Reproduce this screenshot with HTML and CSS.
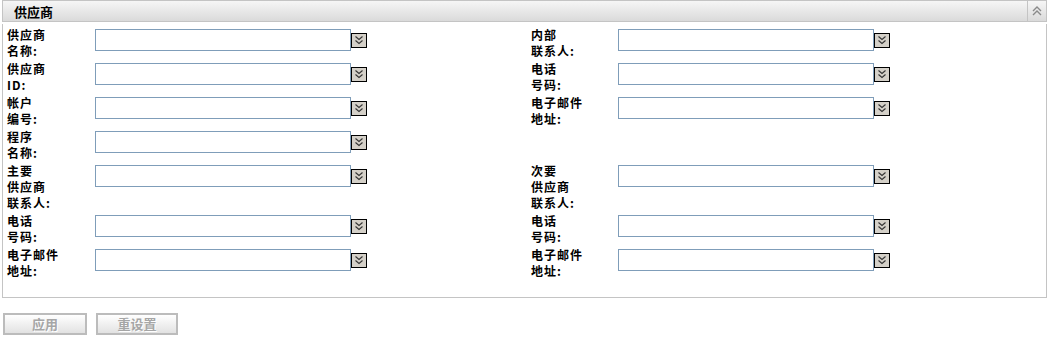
FILE: index.html
```html
<!DOCTYPE html>
<html lang="zh-CN">
<head>
    <meta charset="UTF-8">
    <title>供应商</title>
    <link rel="stylesheet" href="styles.css">
</head>
<body>
    <section class="panel">
        <div class="panel-head">
            <span class="panel-title">供应商</span>
            <span class="toggle">
                <svg width="18" height="20" viewBox="0 0 18 20"><path d="M5 10 L9 6 L13 10 M5 14 L9 10 L13 14" fill="none" stroke="#8a8a8a" stroke-width="1.4"/></svg>
            </span>
        </div>
        <div class="panel-body">
            <div class="form">
                <div class="lbl">供应商<br>名称:</div>
                <div class="fld"><input type="text"><span class="pick"></span></div>
                <div class="lbl">内部<br>联系人:</div>
                <div class="fld"><input type="text"><span class="pick"></span></div>

                <div class="lbl">供应商<br>ID:</div>
                <div class="fld"><input type="text"><span class="pick"></span></div>
                <div class="lbl">电话<br>号码:</div>
                <div class="fld"><input type="text"><span class="pick"></span></div>

                <div class="lbl">帐户<br>编号:</div>
                <div class="fld"><input type="text"><span class="pick"></span></div>
                <div class="lbl">电子邮件<br>地址:</div>
                <div class="fld"><input type="text"><span class="pick"></span></div>

                <div class="lbl">程序<br>名称:</div>
                <div class="fld"><input type="text"><span class="pick"></span></div>
                <div class="lbl"></div>
                <div class="fld"></div>

                <div class="lbl">主要<br>供应商<br>联系人:</div>
                <div class="fld"><input type="text"><span class="pick"></span></div>
                <div class="lbl">次要<br>供应商<br>联系人:</div>
                <div class="fld"><input type="text"><span class="pick"></span></div>

                <div class="lbl">电话<br>号码:</div>
                <div class="fld"><input type="text"><span class="pick"></span></div>
                <div class="lbl">电话<br>号码:</div>
                <div class="fld"><input type="text"><span class="pick"></span></div>

                <div class="lbl">电子邮件<br>地址:</div>
                <div class="fld"><input type="text"><span class="pick"></span></div>
                <div class="lbl">电子邮件<br>地址:</div>
                <div class="fld"><input type="text"><span class="pick"></span></div>
            </div>
        </div>
    </section>

    <div class="actions">
        <button class="btn apply">应用</button>
        <button class="btn reset">重设置</button>
    </div>

    <script>
        document.querySelectorAll('.pick').forEach(function (el) {
            el.innerHTML = '<svg width="16" height="15" viewBox="0 0 16 15">' +
                '<rect x="0.5" y="0.5" width="15" height="14" fill="#d4d0c8" stroke="#000"/>' +
                '<path d="M4.5 3.5 L8 6.5 L11.5 3.5 M4.5 7.5 L8 10.5 L11.5 7.5" fill="none" stroke="#333" stroke-width="1.1"/>' +
                '</svg>';
        });
    </script>
</body>
</html>
```

FILE: styles.css
```css
body {
    margin: 0;
    padding: 0 3px 0 2px;
    background: #fff;
    font-family: "Noto Sans CJK SC", "Liberation Sans", sans-serif;
    color: #000;
}
.panel {
    width: 1045px;
}
.panel-head {
    display: flex;
    height: 20px;
    border: 1px solid #c4c4c4;
    background: linear-gradient(#f6f6f6, #dadada);
    margin-bottom: 2px;
}
.panel-title {
    flex: 1;
    padding-left: 11px;
    font-size: 13px;
    font-weight: bold;
    line-height: 21px;
}
.toggle {
    width: 18px;
    border-left: 1px solid #c4c4c4;
    display: flex;
    align-items: center;
    justify-content: center;
}
.panel-body {
    box-sizing: border-box;
    height: 274px;
    border: 1px solid #c4c4c4;
    border-top: none;
    padding: 3px 0 0 4px;
}
.form {
    display: grid;
    grid-template-columns: 88px 436px 87px 1fr;
    row-gap: 2px;
    align-items: start;
}
.lbl {
    font-size: 12px;
    font-weight: bold;
    letter-spacing: 1px;
    line-height: 16px;
    min-height: 32px;
}
.fld {
    display: flex;
    align-items: center;
    margin-top: 2px;
}
.fld input {
    width: 256px;
    height: 22px;
    box-sizing: border-box;
    border: 1px solid #7f9db9;
    margin: 0;
    padding: 0 3px;
}
.pick {
    display: flex;
}
.actions {
    display: flex;
    gap: 9px;
    margin: 15px 0 0 1px;
}
.btn {
    height: 22px;
    border: 2px solid #bcbcbc;
    background: linear-gradient(#ffffff, #e2e2e2);
    color: #a6a6a6;
    text-shadow: 1px 1px 0 #fff;
    font-family: "Noto Sans CJK SC", sans-serif;
    font-size: 13px;
    font-weight: bold;
    line-height: 16px;
    padding: 0;
}
.apply {
    width: 84px;
}
.reset {
    width: 82px;
}
```
